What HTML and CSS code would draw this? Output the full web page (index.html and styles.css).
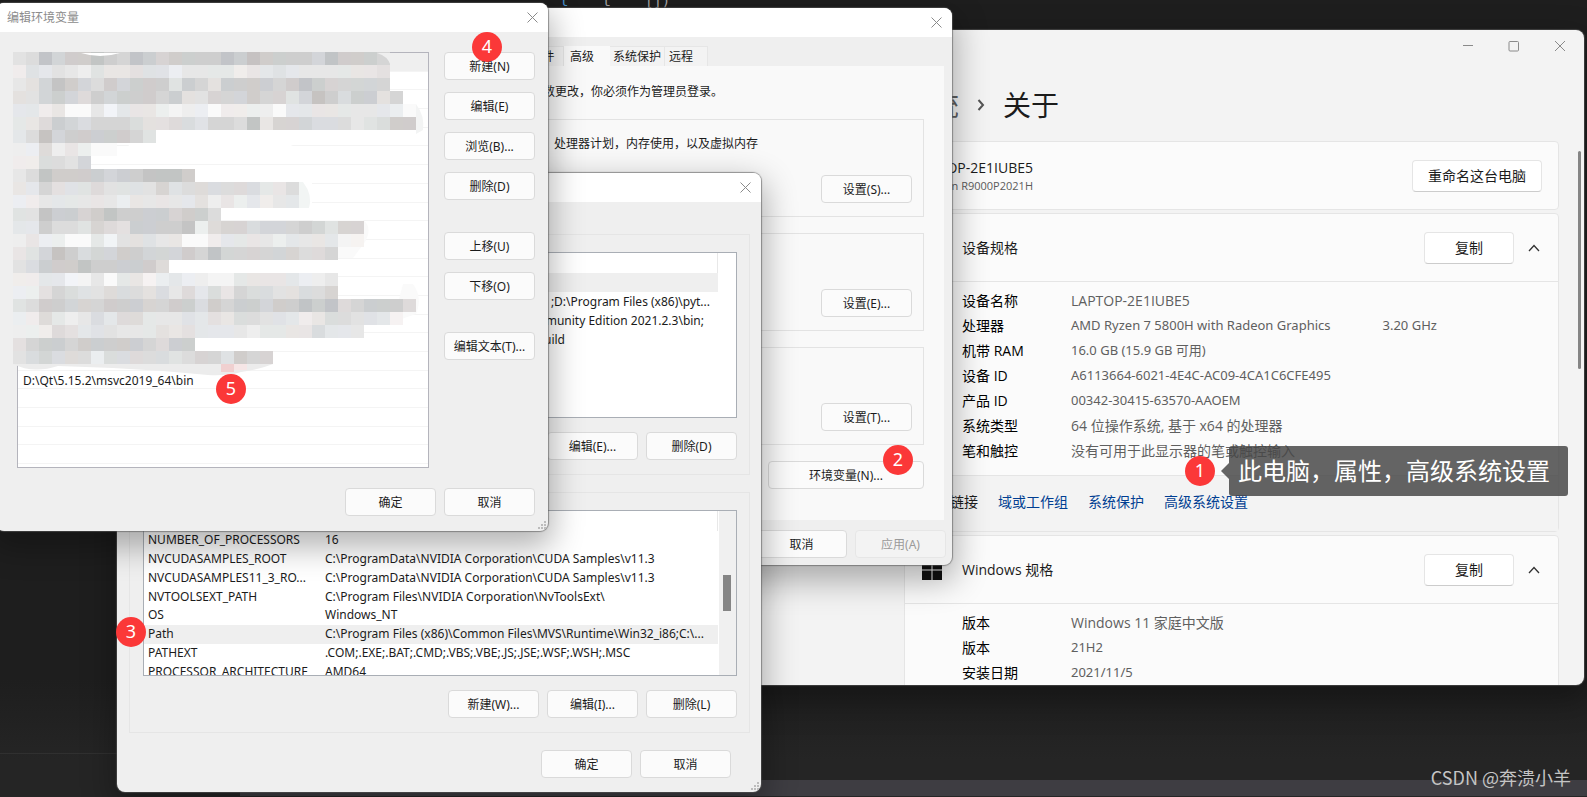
FILE: index.html
```html
<!DOCTYPE html>
<html lang="zh-CN">
<head>
<meta charset="utf-8">
<title>编辑环境变量</title>
<link rel="stylesheet" href="styles.css">
</head>
<body>
<main class="desktop">
  <div class="editor-code" aria-hidden="true"><span class="code-blue">l</span><span>t</span><span>[])</span></div>
  <div class="editor-line"></div>
  <div class="editor-bar"></div>

  <section class="window settings">
    <header class="caption">
      <button class="cap-btn" aria-label="最小化"><svg width="12" height="12" viewBox="0 0 12 12"><path d="M1 5.5h10"/></svg></button>
      <button class="cap-btn" aria-label="最大化"><svg width="12" height="12" viewBox="0 0 12 12"><rect x="1" y="1.500" width="9.500" height="9.500" rx="1"/></svg></button>
      <button class="cap-btn" aria-label="关闭"><svg width="12" height="12" viewBox="0 0 12 12"><path d="M1 1l10 10M11 1L1 11"/></svg></button>
    </header>
    <h1 class="crumbs"><span class="crumb-parent">系统</span><svg width="8" height="12" viewBox="0 0 8 12"><path d="M1.500 1l4.500 5-4.500 5"/></svg><span>关于</span></h1>
    <div class="cards">
      <div class="card device">
        <div class="device-text"><div>LAPTOP-2E1IUBE5</div><div class="model">Legion R9000P2021H</div></div>
        <button class="fluent wide">重命名这台电脑</button>
      </div>
      <div class="card">
        <div class="card-head"><h2>设备规格</h2><button class="fluent">复制</button><button class="chev" aria-label="折叠"><svg width="12" height="8" viewBox="0 0 12 8"><path d="M1 7l5-5.500L11 7"/></svg></button></div>
        <dl class="specs">
          <dt>设备名称</dt><dd>LAPTOP-2E1IUBE5</dd>
          <dt>处理器</dt><dd class="latin"><span>AMD Ryzen 7 5800H with Radeon Graphics</span><span>3.20 GHz</span></dd>
          <dt>机带 RAM</dt><dd class="latin">16.0 GB (15.9 GB 可用)</dd>
          <dt>设备 ID</dt><dd class="latin">A6113664-6021-4E4C-AC09-4CA1C6CFE495</dd>
          <dt>产品 ID</dt><dd class="latin">00342-30415-63570-AAOEM</dd>
          <dt>系统类型</dt><dd>64 位操作系统, 基于 x64 的处理器</dd>
          <dt>笔和触控</dt><dd>没有可用于此显示器的笔或触控输入</dd>
        </dl>
        <nav class="related"><span>相关链接</span><a href="#">域或工作组</a><a href="#">系统保护</a><a href="#">高级系统设置</a></nav>
      </div>
      <div class="card">
        <div class="card-head"><svg class="winlogo" width="20" height="20" viewBox="0 0 20 20"><path d="M0 0h9.500v9.500H0zM10.500 0H20v9.500h-9.500zM0 10.500h9.500V20H0zM10.500 10.500H20V20h-9.500z"/></svg><h2>Windows 规格</h2><button class="fluent">复制</button><button class="chev" aria-label="折叠"><svg width="12" height="8" viewBox="0 0 12 8"><path d="M1 7l5-5.500L11 7"/></svg></button></div>
        <dl class="specs">
          <dt>版本</dt><dd>Windows 11 家庭中文版</dd>
          <dt>版本</dt><dd class="latin">21H2</dd>
          <dt>安装日期</dt><dd class="latin">2021/11/5</dd>
        </dl>
      </div>
    </div>
    <div class="thumb settings-thumb"></div>
  </section>

  <section class="window sysprops">
    <header class="titlebar"><button class="close" aria-label="关闭"><svg width="11" height="11" viewBox="0 0 11 11"><path d="M.5.5l10 10M10.500.5l-10 10"/></svg></button></header>
    <div class="tabs" role="tablist"><button class="tab" role="tab">硬件</button><button class="tab active" role="tab">高级</button><button class="tab" role="tab">系统保护</button><button class="tab" role="tab">远程</button></div>
    <div class="panel">
      <p class="admin">要进行大多数更改，你必须作为管理员登录。</p>
      <div class="box"><p>处理器计划，内存使用，以及虚拟内存</p><button class="btn">设置(S)...</button></div>
      <div class="box"><button class="btn">设置(E)...</button></div>
      <div class="box"><button class="btn">设置(T)...</button></div>
      <button class="btn env">环境变量(N)...</button>
    </div>
    <div class="actions sys-actions"><button class="btn">取消</button><button class="btn" disabled>应用(A)</button></div>
  </section>

  <section class="window envvars">
    <header class="titlebar"><button class="close" aria-label="关闭"><svg width="11" height="11" viewBox="0 0 11 11"><path d="M.5.5l10 10M10.500.5l-10 10"/></svg></button></header>
    <div class="group">
      <div class="list user-list">
        <div class="list-head"></div>
        <div class="rows">
          <div class="row selected"></div>
          <div class="row"><span>;D:\Program Files (x86)\pyt...</span></div>
          <div class="row inset"><span>munity Edition 2021.2.3\bin;</span></div>
          <div class="row short"><span>build</span></div>
        </div>
      </div>
      <div class="actions"><button class="btn">编辑(E)...</button><button class="btn">删除(D)</button></div>
    </div>
    <div class="group">
      <div class="list sys-list">
        <div class="list-head"></div>
        <table class="vars">
          <tr><td>NUMBER_OF_PROCESSORS</td><td>16</td></tr>
          <tr><td>NVCUDASAMPLES_ROOT</td><td>C:\ProgramData\NVIDIA Corporation\CUDA Samples\v11.3</td></tr>
          <tr><td>NVCUDASAMPLES11_3_RO...</td><td>C:\ProgramData\NVIDIA Corporation\CUDA Samples\v11.3</td></tr>
          <tr><td>NVTOOLSEXT_PATH</td><td>C:\Program Files\NVIDIA Corporation\NvToolsExt\</td></tr>
          <tr><td>OS</td><td>Windows_NT</td></tr>
          <tr class="selected"><td>Path</td><td>C:\Program Files (x86)\Common Files\MVS\Runtime\Win32_i86;C:\...</td></tr>
          <tr><td>PATHEXT</td><td>.COM;.EXE;.BAT;.CMD;.VBS;.VBE;.JS;.JSE;.WSF;.WSH;.MSC</td></tr>
          <tr><td>PROCESSOR_ARCHITECTURE</td><td>AMD64</td></tr>
        </table>
        <div class="track"><div class="thumb"></div></div>
      </div>
      <div class="actions"><button class="btn">新建(W)...</button><button class="btn">编辑(I)...</button><button class="btn">删除(L)</button></div>
    </div>
    <div class="actions dialog-actions"><button class="btn">确定</button><button class="btn">取消</button></div>
    <svg class="grip" width="10" height="10" viewBox="0 0 10 10"><path d="M6 0h2v2H6zM3 3h2v2H3zM6 3h2v2H6zM0 6h2v2H0zM3 6h2v2H3zM6 6h2v2H6z"/></svg>
  </section>

  <section class="window editvar">
    <header class="titlebar"><span>编辑环境变量</span><button class="close" aria-label="关闭"><svg width="11" height="11" viewBox="0 0 11 11"><path d="M.5.5l10 10M10.500.5l-10 10"/></svg></button></header>
    <div class="edit-body">
      <ul class="list paths" id="paths"></ul>
      <div class="side">
        <button class="btn">新建(N)</button><button class="btn">编辑(E)</button><button class="btn">浏览(B)...</button><button class="btn">删除(D)</button>
        <button class="btn spaced">上移(U)</button><button class="btn">下移(O)</button><button class="btn spaced">编辑文本(T)...</button>
      </div>
    </div>
    <div class="actions dialog-actions"><button class="btn">确定</button><button class="btn">取消</button></div>
    <svg class="mosaic" id="mosaic" width="419" height="325" viewBox="0 0 419 325" aria-hidden="true"></svg>
    <svg class="grip" width="10" height="10" viewBox="0 0 10 10"><path d="M6 0h2v2H6zM3 3h2v2H3zM6 3h2v2H6zM0 6h2v2H0zM3 6h2v2H3zM6 6h2v2H6z"/></svg>
  </section>

  <span class="pin pin-1">1</span>
  <span class="pin pin-2">2</span>
  <span class="pin pin-3">3</span>
  <span class="pin pin-4">4</span>
  <span class="pin pin-5">5</span>
  <div class="tip">此电脑，属性，高级系统设置</div>
  <div class="watermark">CSDN @奔溃小羊</div>
</main>
<script src="app.js"></script>
</body>
</html>
```
FILE: styles.css
```css
* { box-sizing: border-box; }
body { margin: 0; background: #202020; }
button { font: inherit; color: inherit; }
h1, h2, p, dl, dd, ul { margin: 0; padding: 0; font-weight: 400; }

.desktop {
  position: relative;
  height: 100vh;
  overflow: hidden;
  background: linear-gradient(#1e1e1e 0, #1e1e1e 680px, #252525 760px);
  font: 12px/18px "Noto Sans", "Noto Sans CJK SC", sans-serif;
  color: #1b1b1b;
}
.editor-code {
  position: absolute;
  left: 560px;
  top: -8px;
  display: flex;
  gap: 34px;
  font: 14px/18px "DejaVu Sans Mono", monospace;
  color: #aaa;
}
.code-blue { color: #4a9ad8; }
.editor-line {
  position: absolute;
  left: 0;
  bottom: 43px;
  width: 117px;
  height: 1px;
  background: #303030;
}
.editor-bar {
  position: absolute;
  left: 240px;
  right: 0;
  bottom: 1px;
  height: 16px;
  background: #3e3d42;
}

.window {
  position: absolute;
  border-radius: 8px;
  background: #efefef;
  box-shadow: 0 0 1px 1px rgba(90, 90, 90, .6), 0 12px 32px 4px rgba(0, 0, 0, .3);
  overflow: hidden;
}
.titlebar {
  display: flex;
  align-items: center;
  height: 29px;
  padding: 0 10px 0 7px;
  background: #fff;
  color: #8c8c8c;
}
.close {
  display: flex;
  margin-left: auto;
  padding: 0;
  border: 0;
  background: none;
}
.close svg, .cap-btn svg { fill: none; stroke: #8a8a8a; }

.btn {
  width: 91px;
  height: 28px;
  padding: 1px 0 0;
  border: 1px solid #dadada;
  border-radius: 4px;
  background: #fbfbfb;
  white-space: nowrap;
}
.btn:disabled { background: #f3f3f3; border-color: #e6e6e6; color: #9a9a9a; }
.actions { display: flex; justify-content: flex-end; gap: 8px; }
.list { position: relative; background: #fff; border: 1px solid #a9aeb5; overflow: hidden; }
.selected { background: #efefef; }
.thumb { width: 8px; height: 36px; background: #858585; }
.grip { position: absolute; right: 0; bottom: 0; fill: #bcbcbc; }

.settings { left: 640px; right: 3px; top: 30px; height: 655px; background: #f3f3f3; font-family: "Open Sans", "Noto Sans CJK SC", sans-serif; font-size: 14px; line-height: 25px; }
.caption { display: flex; justify-content: flex-end; padding: 10px 18px 0 0; gap: 34px; }
.cap-btn { display: flex; padding: 0; border: 0; background: none; }
.crumbs { display: flex; align-items: center; gap: 18px; margin: 33px 0 0 263px; font-size: 28px; line-height: 40px; }
.crumb-parent { color: #5f5f5f; }
.crumbs svg { fill: none; stroke: #555; stroke-width: 2; }
.cards { display: flex; flex-direction: column; gap: 3px; margin: 16px 25px 0 264px; }
.card { border: 1px solid #e5e5e5; border-radius: 4px; background: #fbfbfb; }
.device { display: flex; align-items: center; justify-content: space-between; height: 69px; padding: 0 16px 0 12px; }
.device-text { width: 116px; padding-top: 2px; display: flex; flex-direction: column; align-items: flex-end; line-height: 18px; white-space: nowrap; }
.model { font-size: 11px; color: #5c5c5c; }
.fluent {
  width: 90px;
  height: 32px;
  padding: 0;
  border: 1px solid #e5e5e5;
  border-bottom-color: #ccc;
  border-radius: 4px;
  background: #fff;
}
.wide { width: 130px; }
.card-head { display: flex; align-items: center; height: 68px; padding: 0 18px 0 17px; border-bottom: 1px solid #e5e5e5; }
.card-head h2 { margin: 0 auto 0 40px; font-size: 14px; }
.card-head .winlogo + h2 { margin-left: 20px; }
.winlogo { fill: #111; }
.chev { display: flex; margin-left: 14px; padding: 0; border: 0; background: none; }
.chev svg { fill: none; stroke: #333; stroke-width: 1.3; }
.specs { display: grid; grid-template-columns: 109px 1fr; padding: 6px 0 12px 57px; color: #000; }
.specs dd { display: flex; gap: 52px; color: #5f5f5f; white-space: nowrap; }
.specs .latin { font-family: "Noto Sans", "Noto Sans CJK SC", sans-serif; font-size: 13px; }
.related { display: flex; gap: 20px; height: 56px; align-items: center; padding: 0 0 4px 17px; border-top: 1px solid #e5e5e5; background: #f3f3f3; }
.related a { color: #003e92; text-decoration: none; }
.settings-thumb { position: absolute; right: 3px; top: 121px; width: 3px; height: 218px; border-radius: 2px; }

.sysprops { left: 458px; top: 8px; width: 494px; padding-bottom: 7px; }
.tabs { display: flex; align-items: stretch; height: 29px; padding: 9px 0 0 64px; }
.tab { padding: 0 6px; border: 1px solid #e6e6e6; border-bottom: 0; border-left: 0; background: #f3f3f3; white-space: nowrap; line-height: 18px; }
.tab.active { width: 46px; background: #f9f9f9; border-color: #f9f9f9; text-align: left; }
.tab:last-child { padding: 0 14px 0 4px; }
.tab:nth-child(3) { padding: 0 3px; }
.tab:first-child { width: 42px; }
.panel { display: flex; flex-direction: column; gap: 16px; height: 454px; margin: 0 8px; padding: 17px 20px 0 17px; background: #f9f9f9; }
.admin { height: 20px; }
.box { display: flex; flex-direction: column; align-items: flex-end; height: 98px; padding: 15px 11px 13px 0; border: 1px solid #e3e3e3; }
.box p { margin-right: 154px; }
.box .btn { margin-top: auto; }
.env { width: 156px; align-self: flex-end; flex: none; }
.sys-actions { padding: 10px 6px 0 0; }

.envvars { left: 117px; top: 173px; width: 644px; padding-bottom: 14px; }
.group { margin: 0 11px 17px 12px; padding: 17px 12px 14px 13px; border: 1px solid #e5e5e5; }
.titlebar + .group { margin-top: 32px; }
.group .list { height: 166px; margin-bottom: 14px; }
.list-head { width: 574px; height: 20px; border-right: 1px solid #e8e8e8; }
.rows { display: grid; width: 574px; grid-template-rows: repeat(4, 1fr); height: 76px; line-height: 19px; }
.row { padding-right: 8px; text-align: right; white-space: nowrap; }
.inset { padding-right: 14px; }
.short { padding-right: 153px; }
.vars { width: 574px; height: 150px; table-layout: fixed; border-collapse: collapse; line-height: 18px; }
.vars td { padding: 0 0 0 4px; white-space: nowrap; }
.vars td:first-child { width: 177px; }
.track { position: absolute; top: 0; right: 0; bottom: 0; width: 17px; padding: 64px 0 0 4px; background: #f0f0f0; }
.envvars .dialog-actions { padding-right: 30px; }

.editvar { left: -4px; top: 3px; width: 552px; padding: 0 0 15px 4px; }
.edit-body { display: flex; gap: 15px; padding: 20px 13px 20px 17px; }
.editvar .titlebar { margin-left: -4px; padding-left: 11px; }
.paths { display: flex; flex-direction: column; flex: 1; height: 416px; padding-bottom: 3px; border-color: #b4b4bc; list-style: none; }
.paths li { flex: 1; min-height: 0; padding-left: 5px; border-bottom: 1px solid #f4f4f4; line-height: 20px; }
.side { display: flex; flex-direction: column; gap: 12px; }
.side .spaced { margin-top: 20px; }
.editvar .dialog-actions { padding-right: 13px; }
.mosaic { position: absolute; left: 17px; top: 49px; }

.pin {
  position: absolute;
  width: 30px;
  height: 30px;
  border-radius: 50%;
  background: #fb3838;
  color: #fff;
  font-size: 18px;
  line-height: 29px;
  text-align: center;
}
.pin-1 { left: 1185px; top: 456px; }
.pin-2 { left: 883px; top: 445px; }
.pin-3 { left: 116px; top: 617px; }
.pin-4 { left: 472px; top: 32px; }
.pin-5 { left: 216px; top: 374px; }
.tip {
  position: absolute;
  left: 1229px;
  top: 446px;
  padding: 7px 18px 7px 9px;
  border-radius: 3px;
  background: rgba(70, 70, 70, .84);
  color: #fff;
  font-size: 24px;
  line-height: 36px;
  white-space: nowrap;
}
.tip::before {
  content: "";
  position: absolute;
  left: -8px;
  top: 17px;
  border: solid transparent;
  border-width: 8px 8px 8px 0;
  border-right-color: rgba(70, 70, 70, .84);
}
.watermark {
  position: absolute;
  right: 16px;
  bottom: 8px;
  font: 18px/24px "Noto Sans CJK SC", sans-serif;
  color: #c4c4c4;
}
```
FILE: app.js
```js
// Path list: 22 lines, one of them readable, the first one selected.
const list = document.getElementById('paths');
for (let i = 0; i < 22; i++) {
  const li = document.createElement('li');
  if (i === 0) li.className = 'selected';
  if (i === 17) li.textContent = 'D:\\Qt\\5.15.2\\msvc2019_64\\bin';
  list.appendChild(li);
}

// Pixelated cover: one digit per 13px cell, higher digits are darker.
const levels = [255, 250, 244, 238, 231, 226, 220, 213, 206, 196];
const tints = [[0, 0, 0], [2, -1, -3], [-3, 0, 2], [0, 0, 0], [-2, 1, 0], [2, -2, -2], [-2, 0, 4]];
const cover = [
  '56978898798788889898888798887',
  '35454354455534444344544444445',
  '45798768788858758888789877777',
  '557876878887855777877579868857',
  '4434114244432331333314444444431',
  '4468767776556657769477766645688',
  '46978888875',
  '33634311',
  '336657',
  '46988887889998',
  '44755565555756666664462',
  '33444444344444534343442',
  '5598878988887886',
  '448665765888893677677787577',
  '343311425554411344443444422',
  '4579867788777879777777667',
  '568889888886',
  '3344224144234332244444334',
  '3357655666564646476655667',
  '5688777888778868788788989678886',
  '336434646644454546655434665542',
  '333654554445454444344446444',
  '57887888887688',
  '56766636666656775877'
];
const svg = document.getElementById('mosaic');
const NS = 'http://www.w3.org/2000/svg';
function add(name, attrs) {
  const el = document.createElementNS(NS, name);
  for (const key in attrs) el.setAttribute(key, attrs[key]);
  svg.appendChild(el);
}
add('path', { d: 'M120 85H300L250 105H110z', fill: '#fff' });
add('path', { d: 'M403 52Q412 64 410 78L403 82z', fill: '#f3f4f4' });
add('path', { d: 'M350 168Q360 175 352 190L340 206H300V168z', fill: '#fafafa' });
add('path', { d: 'M390 232H400Q410 246 403 262L380 270z', fill: '#fafafa' });
cover.forEach((line, r) => {
  [...line].forEach((d, c) => {
    const tint = tints[(r * 5 + c * 3 + (r * c) % 4) % tints.length];
    const rgb = tint.map(t => levels[d] + (d > 1 ? t : 0));
    add('rect', { x: c * 13, y: r * 13, width: 13, height: 13, fill: `rgb(${rgb})` });
  });
});
add('path', { d: 'M0 312H260Q245 318 228 320Q215 324 195 323L150 319L100 316L45 314Q20 322 0 312z', fill: '#ececec' });
add('rect', { x: 208, y: 312, width: 13, height: 8, fill: '#f0d0d0' });
add('rect', { x: 221, y: 312, width: 13, height: 6, fill: '#f6e6e6' });
add('path', { d: 'M68 1Q87 7 107 1z', fill: '#fff' });
add('path', { d: 'M364 1H378V14Q375 4 364 1z', fill: '#efefef' });
add('path', { d: 'M299 130V156H296Q300 143 290 130z', fill: '#fff' });
```
